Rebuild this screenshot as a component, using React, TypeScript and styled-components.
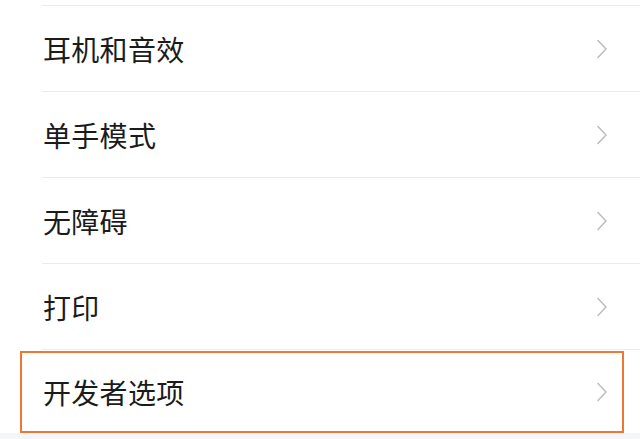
import React from 'react';
import styled, { createGlobalStyle } from 'styled-components';

const GlobalStyle = createGlobalStyle`
  html, body {
    margin: 0;
    padding: 0;
    background: #f5f6f8;
  }
  body {
    font-family: "Noto Sans CJK SC", "Noto Sans", sans-serif;
  }
`;

const Page = styled.div`
  width: 640px;
  height: 439px;
  overflow: hidden;
  background: #f5f6f8;
`;

const List = styled.div`
  background: #ffffff;
  padding-top: 5px;
  display: flex;
  flex-direction: column;
`;

const Row = styled.div<{ $height: number }>`
  position: relative;
  height: ${p => p.$height}px;
  display: flex;
  align-items: center;
  padding-left: 43px;
  padding-right: 32px;
  border-top: 1px solid #ebebeb;
  margin-left: 42px;
  padding-left: 1px;
  box-sizing: border-box;
`;

const Label = styled.span`
  flex: 1;
  font-size: 28px;
  color: #1b1b1b;
  letter-spacing: 0.3px;
  line-height: 1;
`;

const Chevron = styled.svg`
  width: 12px;
  height: 20px;
  flex-shrink: 0;
`;

const Highlight = styled.div`
  position: absolute;
  left: -22px;
  top: 1px;
  width: 604px;
  bottom: 0;
  border: 2px solid #f07636;
  box-sizing: border-box;
  pointer-events: none;
`;

const items = ['耳机和音效', '单手模式', '无障碍', '打印', '开发者选项'];

export default function App() {
  return (
    <Page>
      <GlobalStyle />
      <List>
        {items.map((label, i) => {
          const last = i === items.length - 1;
          return (
            <Row key={label} $height={last ? 84 : 86}>
              <Label>{label}</Label>
              <Chevron viewBox="0 0 12 20">
                <path d="M2 1.5 L10 10 L2 18.5" fill="none" stroke="#bdbdbd" strokeWidth="1.5" strokeLinecap="round" strokeLinejoin="round" />
              </Chevron>
              {last && <Highlight />}
            </Row>
          );
        })}
      </List>
    </Page>
  );
}
